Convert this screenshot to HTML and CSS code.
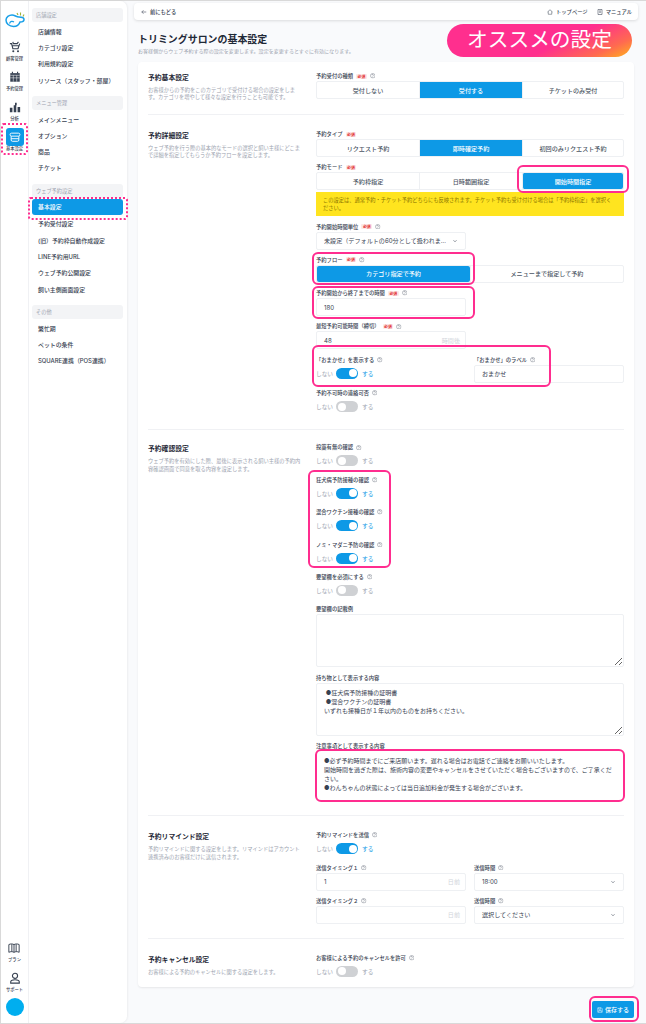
FILE: index.html
```html
<!DOCTYPE html>
<html lang="ja">
<head>
<meta charset="utf-8">
<title>トリミングサロンの基本設定</title>
<link rel="stylesheet" href="styles.css">
</head>
<body>
<svg class="defs" width="0" height="0" aria-hidden="true">
  <symbol id="help" viewBox="0 0 12 12"><circle cx="6" cy="6" r="5" fill="none" stroke="#6b7280" stroke-width="1"/><path d="M4.4 4.8a1.6 1.6 0 1 1 2.5 1.3c-.6.4-.9.7-.9 1.3" fill="none" stroke="#6b7280" stroke-width="1"/><circle cx="6" cy="9" r=".6" fill="#6b7280"/></symbol>
  <symbol id="chev" viewBox="0 0 12 12"><path d="M3 4.5 6 7.5 9 4.5" fill="none" stroke="#4b5563" stroke-width="1.3"/></symbol>
</svg>
<div class="page">
  <nav class="rail">
    <svg class="logo" viewBox="0 0 20 16"><path d="M1 8c0-3 3-5 6-5 3 0 4 2 7 2 2 0 5 .5 5 2.500S17 10 15 10c-1 3-3 4.500-6.500 4.500C4 14.500 1 11.500 1 8Z" fill="none" stroke="#1aa0e8" stroke-width="1.500"/><path d="M4.500 11.500c1-2.500 3-2.500 4.500-1.500" fill="none" stroke="#1aa0e8" stroke-width="1.200"/><path d="M13 3 12 1M15.500 3.500 15.500 .5M18 4.500 19 2.500" stroke="#a3b43a" stroke-width="1.100"/></svg>
    <a class="rail-item"><svg class="rail-icon" viewBox="0 0 14 14"><path d="M1 3h2l1.500 6h6L12.500 3M11 1 9.500 3H5L4.500 1M3.500 5.500h8" fill="none" stroke="#374151" stroke-width="1.300"/><circle cx="5" cy="12" r="1.200" fill="#374151"/><circle cx="10.500" cy="12" r="1.200" fill="#374151"/></svg><span>顧客管理</span></a>
    <a class="rail-item"><svg class="rail-icon" viewBox="0 0 14 14"><path d="M1.500 2.500h11v10h-11z" fill="#374151"/><path d="M4 1v2M10 1v2" stroke="#374151" stroke-width="1.300"/><path d="M1.500 5h11M1.500 8h11M5 5v7.500M9 5v7.500" stroke="#fff" stroke-width=".6"/></svg><span>予約管理</span></a>
    <a class="rail-item"><svg class="rail-icon" viewBox="0 0 14 14"><path d="M1 8h3v5H1zM5.500 5h3v8h-3zM10 7h3v6h-3zM7 2h2v3H7z" fill="#374151"/></svg><span>分析</span></a>
    <a class="rail-item is-active"><span class="rail-box"><svg class="rail-icon" viewBox="0 0 14 14"><path d="M3 2.500h8a1.500 1.500 0 0 1 0 3.500H3a1.500 1.500 0 0 1 0-3.500ZM2.500 6v4.500A1.500 1.500 0 0 0 4 12h6a1.500 1.500 0 0 0 1.500-1.500V6M2.500 9h9" fill="none" stroke="#fff" stroke-width="1.100"/></svg></span><span>基本設定</span></a>
    <div class="rail-spacer"></div>
    <a class="rail-item"><svg class="rail-icon" viewBox="0 0 14 14"><path d="M1 3c2-1 4-1 6 0 2-1 4-1 6 0v9c-2-1-4-1-6 0-2-1-4-1-6 0ZM4.500 2.500v9M7 3v9M9.500 2.500v9" fill="none" stroke="#374151" stroke-width="1.100"/></svg><span>プラン</span></a>
    <a class="rail-item"><svg class="rail-icon" viewBox="0 0 14 14"><circle cx="7" cy="4.500" r="3" fill="none" stroke="#374151" stroke-width="1.300"/><path d="M2 13v-1.500C2 9.500 4 9 7 9s5 .5 5 2.500V13Z" fill="none" stroke="#374151" stroke-width="1.300"/></svg><span>サポート</span></a>
    <span class="avatar"></span>
  </nav>

  <aside class="subnav">
    <h3 class="nav-head">店舗設定</h3>
    <a class="nav-item">店舗情報</a>
    <a class="nav-item">カテゴリ設定</a>
    <a class="nav-item">利用規約設定</a>
    <a class="nav-item">リソース（スタッフ・部屋）</a>
    <h3 class="nav-head">メニュー管理</h3>
    <a class="nav-item">メインメニュー</a>
    <a class="nav-item">オプション</a>
    <a class="nav-item">商品</a>
    <a class="nav-item">チケット</a>
    <h3 class="nav-head">ウェブ予約設定</h3>
    <a class="nav-item is-active">基本設定</a>
    <a class="nav-item">予約受付設定</a>
    <a class="nav-item">(旧）予約枠自動作成設定</a>
    <a class="nav-item">LINE予約用URL</a>
    <a class="nav-item">ウェブ予約公開設定</a>
    <a class="nav-item">飼い主側画面設定</a>
    <h3 class="nav-head">その他</h3>
    <a class="nav-item">繁忙期</a>
    <a class="nav-item">ペットの条件</a>
    <a class="nav-item">SQUARE連携（POS連携）</a>
  </aside>

  <main class="main">
    <header class="topbar">
      <a class="back"><svg class="top-icon" viewBox="0 0 12 12"><path d="M10.500 6h-9M5 2.500 1.500 6 5 9.500" fill="none" stroke="#374151" stroke-width="1.100"/></svg>前にもどる</a>
      <div class="top-links">
        <a class="top-link"><svg class="top-icon" viewBox="0 0 12 12"><path d="M1 6 6 1.500 11 6M2.500 5v5.500h7V5" fill="none" stroke="#374151" stroke-width="1"/></svg>トップページ</a>
        <a class="top-link"><svg class="top-icon" viewBox="0 0 12 12"><path d="M2 1h8v10H2zM4 4h4M4 6.500h4" fill="none" stroke="#374151" stroke-width="1.100"/></svg>マニュアル</a>
      </div>
    </header>

    <div class="heading">
      <h1 class="title">トリミングサロンの基本設定</h1>
      <p class="subtitle">お客様側からウェブ予約する際の設定を変更します。設定を変更するとすぐに有効になります。</p>
    </div>

    <div class="card">
      <section class="section">
        <div class="sec-info">
          <h2>予約基本設定</h2>
          <p>お客様からの予約をこのカテゴリで受付ける場合の設定をします。カテゴリを増やして様々な設定を行うことも可能です。</p>
        </div>
        <div class="fields">
          <div class="field">
            <label class="label">予約受付の種類<b class="req">必須</b><svg class="help"><use href="#help"/></svg></label>
            <div class="seg seg-3"><span>受付しない</span><span class="on">受付する</span><span>チケットのみ受付</span></div>
          </div>
        </div>
      </section>

      <section class="section">
        <div class="sec-info">
          <h2>予約詳細設定</h2>
          <p>ウェブ予約を行う際の基本的なモードの選択と飼い主様にどこまで詳細を指定してもらうか予約フローを設定します。</p>
        </div>
        <div class="fields">
          <div class="field">
            <label class="label">予約タイプ<b class="req">必須</b></label>
            <div class="seg seg-3"><span>リクエスト予約</span><span class="on">即時確定予約</span><span>初回のみリクエスト予約</span></div>
          </div>
          <div class="field">
            <label class="label">予約モード<b class="req">必須</b></label>
            <div class="seg seg-3"><span>予約枠指定</span><span>日時範囲指定</span><span class="on round">開始時間指定</span></div>
            <p class="notice">この設定は、通常予約・チケット予約どちらにも反映されます。チケット予約も受け付ける場合は「予約枠指定」を選択ください。</p>
          </div>
          <div class="field half">
            <label class="label">予約開始時間単位<b class="req">必須</b><svg class="help"><use href="#help"/></svg></label>
            <div class="control select"><span class="clip">未設定（デフォルトの60分として扱われます）</span><svg class="chev"><use href="#chev"/></svg></div>
          </div>
          <div class="field">
            <label class="label">予約フロー<b class="req">必須</b><svg class="help"><use href="#help"/></svg></label>
            <div class="seg seg-2"><span class="on round">カテゴリ指定で予約</span><span>メニューまで指定して予約</span></div>
          </div>
          <div class="field half">
            <label class="label">予約開始から終了までの時間<b class="req">必須</b><svg class="help"><use href="#help"/></svg></label>
            <div class="control">180</div>
          </div>
          <div class="field half">
            <label class="label">最短予約可能時間（締切）<b class="req">必須</b><svg class="help"><use href="#help"/></svg></label>
            <div class="control with-unit">48<span class="unit">時間後</span></div>
          </div>
          <div class="pair">
            <div class="field">
              <label class="label">「おまかせ」を表示する<svg class="help"><use href="#help"/></svg></label>
              <div class="toggle-row on"><span>しない</span><i class="switch"></i><span class="yes">する</span></div>
            </div>
            <div class="field">
              <label class="label">「おまかせ」のラベル<svg class="help"><use href="#help"/></svg></label>
              <div class="control">おまかせ</div>
            </div>
          </div>
          <div class="field">
            <label class="label">予約不可時の連絡可否<svg class="help"><use href="#help"/></svg></label>
            <div class="toggle-row"><span>しない</span><i class="switch"></i><span class="yes">する</span></div>
          </div>
        </div>
      </section>

      <section class="section">
        <div class="sec-info">
          <h2>予約確認設定</h2>
          <p>ウェブ予約を有効にした際、最後に表示される飼い主様の予約内容確認画面で同意を取る内容を設定します。</p>
        </div>
        <div class="fields">
          <div class="field">
            <label class="label">投薬有無の確認<svg class="help"><use href="#help"/></svg></label>
            <div class="toggle-row"><span>しない</span><i class="switch"></i><span class="yes">する</span></div>
          </div>
          <div class="field">
            <label class="label">狂犬病予防接種の確認<svg class="help"><use href="#help"/></svg></label>
            <div class="toggle-row on"><span>しない</span><i class="switch"></i><span class="yes">する</span></div>
          </div>
          <div class="field">
            <label class="label">混合ワクチン接種の確認<svg class="help"><use href="#help"/></svg></label>
            <div class="toggle-row on"><span>しない</span><i class="switch"></i><span class="yes">する</span></div>
          </div>
          <div class="field">
            <label class="label">ノミ・マダニ予防の確認<svg class="help"><use href="#help"/></svg></label>
            <div class="toggle-row on"><span>しない</span><i class="switch"></i><span class="yes">する</span></div>
          </div>
          <div class="field">
            <label class="label">要望欄を必須にする<svg class="help"><use href="#help"/></svg></label>
            <div class="toggle-row"><span>しない</span><i class="switch"></i><span class="yes">する</span></div>
          </div>
          <div class="field">
            <label class="label">要望欄の記載例</label>
            <textarea class="area" readonly></textarea>
          </div>
          <div class="field">
            <label class="label">持ち物として表示する内容</label>
            <textarea class="area" readonly> ●狂犬病予防接種の証明書
 ●混合ワクチンの証明書
いずれも接種日が１年以内のものをお持ちください。</textarea>
          </div>
          <div class="field">
            <label class="label">注意事項として表示する内容</label>
            <textarea class="area area-note" readonly>●必ず予約時間までにご来店願います。遅れる場合はお電話でご連絡をお願いいたします。
開始時間を過ぎた際は、施術内容の変更やキャンセルをさせていただく場合もございますので、ご了承ください。
●わんちゃんの状態によっては当日追加料金が発生する場合がございます。</textarea>
          </div>
        </div>
      </section>

      <section class="section">
        <div class="sec-info">
          <h2>予約リマインド設定</h2>
          <p>予約リマインドに関する設定をします。リマインドはアカウント連携済みのお客様だけに送信されます。</p>
        </div>
        <div class="fields">
          <div class="field">
            <label class="label">予約リマインドを送信<svg class="help"><use href="#help"/></svg></label>
            <div class="toggle-row on"><span>しない</span><i class="switch"></i><span class="yes">する</span></div>
          </div>
          <div class="pair">
            <div class="field">
              <label class="label">送信タイミング１<svg class="help"><use href="#help"/></svg></label>
              <div class="control with-unit">1<span class="unit">日前</span></div>
            </div>
            <div class="field">
              <label class="label">送信時間<svg class="help"><use href="#help"/></svg></label>
              <div class="control select">18:00<svg class="chev"><use href="#chev"/></svg></div>
            </div>
          </div>
          <div class="pair">
            <div class="field">
              <label class="label">送信タイミング２<svg class="help"><use href="#help"/></svg></label>
              <div class="control with-unit"><span class="unit">日前</span></div>
            </div>
            <div class="field">
              <label class="label">送信時間<svg class="help"><use href="#help"/></svg></label>
              <div class="control select">選択してください<svg class="chev"><use href="#chev"/></svg></div>
            </div>
          </div>
        </div>
      </section>

      <section class="section">
        <div class="sec-info">
          <h2>予約キャンセル設定</h2>
          <p>お客様による予約のキャンセルに関する設定をします。</p>
        </div>
        <div class="fields">
          <div class="field">
            <label class="label">お客様による予約のキャンセルを許可<svg class="help"><use href="#help"/></svg></label>
            <div class="toggle-row"><span>しない</span><i class="switch"></i><span class="yes">する</span></div>
          </div>
        </div>
      </section>
    </div>

    <div class="actions">
      <button class="save" type="button"><svg viewBox="0 0 12 12"><path d="M1.500 1.500h7l2 2v7h-9zM3.500 1.500v3h4v-3M3.500 10.500V7h5v3.500" fill="none" stroke="#fff" stroke-width="1"/></svg>保存する</button>
    </div>
  </main>

  <div class="promo">オススメの設定</div>
  <span class="mark dots mark-rail"></span>
  <span class="mark dots mark-nav"></span>
  <span class="mark mark-mode"></span>
  <span class="mark mark-flow"></span>
  <span class="mark mark-time"></span>
  <span class="mark mark-omakase"></span>
  <span class="mark mark-vaccine"></span>
  <span class="mark mark-note"></span>
  <span class="mark mark-save"></span>
</div>
</body>
</html>
```

FILE: styles.css
```css
* { box-sizing: border-box; }
html, body { margin: 0; padding: 0; }
body {
  width: 646px;
  height: 1024px;
  overflow: hidden;
  background: #d9d9d9;
  font-family: Inter, "Noto Sans CJK JP", sans-serif;
  color: #374151;
}
.defs { position: absolute; }
h1, h2, h3, p { margin: 0; }
a { color: inherit; text-decoration: none; }

.page {
  display: flex;
  width: 645px;
  height: 1022px;
  margin: 1px 0 0 1px;
  background: #f9fafc;
}

/* icon rail */
.rail {
  flex: none;
  width: 28px;
  display: flex;
  flex-direction: column;
  align-items: center;
  padding: 11px 0 7px;
  background: #fff;
  border-right: 1px solid #f0f1f4;
}
.logo { width: 20px; height: 16px; margin-bottom: 13px; }
.rail-item {
  display: flex;
  flex-direction: column;
  align-items: center;
  height: 30px;
  font-size: 4.300px;
  line-height: 6px;
  color: #374151;
  font-weight: 500;
}
.rail-icon { width: 12px; height: 12px; margin-bottom: 3px; }
.rail-item.is-active { height: 28px; margin-top: -3px; }
.rail-box {
  display: flex;
  align-items: center;
  justify-content: center;
  width: 18px;
  height: 18px;
  border-radius: 3px;
  background: #0d99e6;
}
.rail-box .rail-icon { margin: 0; }
.rail-spacer { flex: 1; }
.avatar {
  flex: none;
  width: 18px;
  height: 18px;
  margin-top: -4px;
  border-radius: 50%;
  background: #00aeef;
}

/* secondary nav */
.subnav {
  flex: none;
  width: 98px;
  padding: 7px 4px 0 3px;
  background: #fff;
  border-radius: 0 7px 7px 0;
  box-shadow: 1px 0 2px rgba(0, 0, 0, .05);
}
.nav-head {
  height: 14px;
  margin: 0 0 1.700px;
  padding-left: 4px;
  font-size: 5.200px;
  line-height: 14px;
  font-weight: 400;
  color: #9ca3af;
  background: #f3f4f6;
  border-radius: 3px;
}
.nav-item {
  display: block;
  height: 16.300px;
  padding-left: 6px;
  font-size: 5.900px;
  line-height: 16.300px;
  font-weight: 500;
  color: #374151;
  white-space: nowrap;
}
.nav-item + .nav-head { margin-top: 7px; }
.nav-item.is-active {
  height: 16px;
  margin: .3px 0 1px;
  line-height: 16px;
  color: #fff;
  background: #0d99e6;
  border-radius: 3px;
}

/* main */
.main {
  flex: 1;
  min-width: 0;
  padding: 2px 8px 0 7px;
}
.topbar {
  display: flex;
  justify-content: space-between;
  align-items: center;
  height: 17px;
  padding: 0 6px 0 7px;
  background: #fff;
  border-radius: 4px;
  box-shadow: 0 1px 3px rgba(0, 0, 0, .12);
  font-size: 5.300px;
  font-weight: 500;
}
.back, .top-link { display: flex; align-items: center; gap: 3px; }
.top-links { display: flex; gap: 9px; }
.top-icon { width: 6px; height: 6px; }
.heading { padding: 12px 0 0 4px; height: 42px; }
.title { font-size: 9.950px; line-height: 14px; font-weight: 700; color: #1f2937; }
.subtitle { margin-top: 1px; font-size: 5.050px; line-height: 8px; color: #9ca3af; }

.card {
  width: 496px;
  height: 925px;
  margin-left: 4px;
  padding: 0 10px;
  background: #fff;
  border-radius: 4px;
  box-shadow: 0 1px 2px rgba(0, 0, 0, .08);
}
.section {
  display: grid;
  grid-template-columns: 168px 308px;
  padding: 14px 0;
  border-bottom: 1px solid #f0f1f4;
}
.section:first-child { padding: 9px 0 15px; }
.section:nth-child(3) { padding: 12.200px 0 12.300px; }
.section:last-child { border-bottom: 0; }
.sec-info { padding: 2px 12px 0 0; margin-bottom: -6px; }
.sec-info h2 { font-size: 6.800px; line-height: 10px; font-weight: 700; color: #1f2937; }
.sec-info p { margin-top: 4px; font-size: 5.260px; line-height: 7.300px; color: #9ca3af; }

.fields { display: flex; flex-direction: column; gap: 5.300px; }
.field { min-width: 0; }
.half { width: 150px; }
.pair { display: grid; grid-template-columns: 150px 150px; gap: 8px; }
.label {
  display: flex;
  align-items: center;
  height: 10px;
  font-size: 5.300px;
  line-height: 10px;
  font-weight: 500;
  color: #374151;
}
.req {
  margin-left: 3px;
  padding: 0 1.500px;
  font-size: 3.900px;
  line-height: 5px;
  font-weight: 700;
  color: #e02424;
  background: #fde8e8;
  border-radius: 1px;
}
.help { width: 5.500px; height: 5.500px; margin-left: 3px; }

.seg {
  display: grid;
  height: 18px;
  background: #fff;
  border: 1px solid #eef0f3;
  border-radius: 2px;
  font-size: 6.100px;
  font-weight: 500;
  color: #4b5563;
}
.seg-3 { grid-template-columns: 102px 103px 1fr; }
.seg-2 { grid-template-columns: 153px 1fr; }
.seg span {
  display: flex;
  align-items: center;
  justify-content: center;
  border-left: 1px solid #eef0f3;
}
.seg span:first-child { border-left: 0; }
.seg .on { color: #fff; background: #0d99e6; }
.seg .round { border-radius: 2px; }

.notice {
  height: 24px;
  margin-top: 2px;
  padding: 5px 8px 0 7px;
  font-size: 5.250px;
  line-height: 7.400px;
  color: #8a7400;
  background: #ffe41f;
}

.control {
  display: flex;
  align-items: center;
  height: 18px;
  padding: 0 7px;
  font-size: 6.100px;
  font-weight: 400;
  color: #374151;
  background: #fff;
  border: 1px solid #eef0f3;
  border-radius: 2px;
}
.select, .with-unit { justify-content: space-between; }
.clip { white-space: nowrap; overflow: hidden; text-overflow: ellipsis; padding-right: 2px; }
.chev { flex: none; width: 6px; height: 6px; }
.unit { margin-left: auto; margin-right: -2px; color: #d1d5db; }

.toggle-row {
  display: flex;
  align-items: center;
  gap: 3px;
  height: 17.100px;
  font-size: 5.700px;
  color: #9ca3af;
}
.toggle-row .yes { margin-left: 1px; }
.toggle-row.on .yes { color: #0d99e6; }
.switch {
  position: relative;
  width: 22px;
  height: 11px;
  border-radius: 6px;
  background: #cfd1d4;
}
.switch::after {
  content: "";
  position: absolute;
  top: 1.500px;
  left: 1.500px;
  width: 8px;
  height: 8px;
  border-radius: 50%;
  background: #fff;
}
.on .switch { background: #0d99e6; }
.on .switch::after { left: 12.500px; }

.area {
  display: block;
  width: 100%;
  height: 53px;
  padding: 4.500px 7px;
  font: 400 6px/9px Inter, "Noto Sans CJK JP", sans-serif;
  color: #374151;
  background: #fff;
  border: 1px solid #eef0f3;
  border-radius: 2px;
  outline: 0;
}
.area-note { height: 52px; resize: none; border-color: transparent; }

.actions { display: flex; justify-content: flex-end; padding: 14px 4px 0 0; }
.save {
  display: flex;
  align-items: center;
  justify-content: center;
  gap: 2px;
  width: 42px;
  height: 17px;
  padding: 0;
  font: 500 6px/1 Inter, "Noto Sans CJK JP", sans-serif;
  color: #fff;
  background: #0d99e6;
  border: 0;
  border-radius: 2px;
}
.save svg { width: 6px; height: 6px; }

/* annotations laid over the page */
.promo {
  position: absolute;
  left: 447px;
  top: 24px;
  width: 185px;
  height: 33px;
  border-radius: 17px;
  font-size: 20.700px;
  line-height: 32px;
  text-align: center;
  color: #fff;
  background: linear-gradient(155deg, #ff2f8e 60%, #ff6a50 84%, #ffb31a 100%);
}
.mark {
  position: absolute;
  border: 2px solid #ff2d8f;
  border-radius: 6px;
  pointer-events: none;
}
.dots { border: 2px dotted #ff2d8f; border-radius: 3px; }
.mark-rail { left: 1px; top: 123px; width: 27px; height: 32px; }
.mark-nav { left: 28px; top: 197px; width: 100px; height: 23px; }
.mark-mode { left: 517px; top: 165px; width: 112px; height: 28px; }
.mark-flow { left: 312px; top: 252px; width: 163px; height: 33px; }
.mark-time { left: 312px; top: 286px; width: 163px; height: 33px; }
.mark-omakase { left: 312px; top: 345px; width: 239px; height: 42px; }
.mark-vaccine { left: 308px; top: 470px; width: 83px; height: 98px; }
.mark-note { left: 315px; top: 749px; width: 310px; height: 53px; }
.mark-save { left: 589px; top: 996px; width: 50px; height: 26px; }
```
